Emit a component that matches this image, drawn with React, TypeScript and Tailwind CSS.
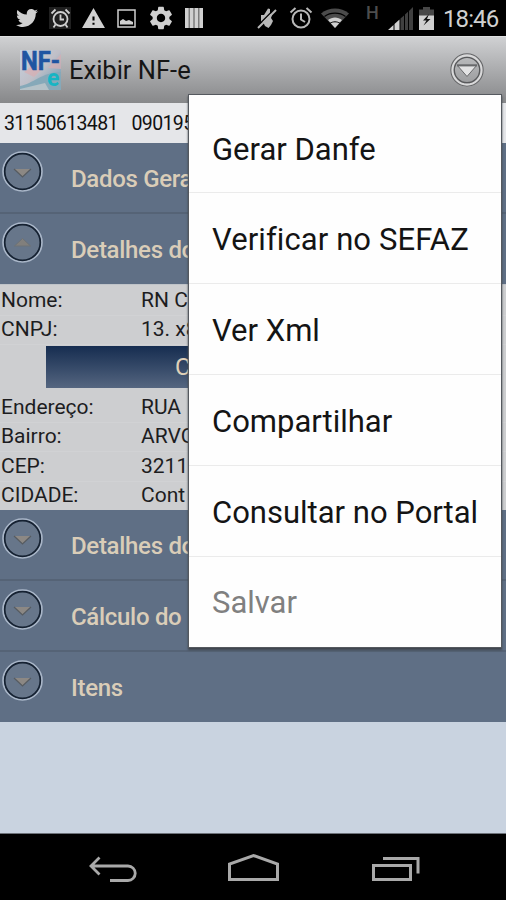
import { FaTwitter } from "react-icons/fa";
import { MdSettings, MdWarning } from "react-icons/md";

interface GroupProps {
    title: string;
    open?: boolean;
    divider?: boolean;
}

const menuItems = [
    { label: "Gerar Danfe", className: "h-[98px] pt-[13px]" },
    { label: "Verificar no SEFAZ", className: "h-[91px] pt-[5px] tracking-[0.1px]" },
    { label: "Ver Xml", className: "h-[91px] pt-[4px]" },
    { label: "Compartilhar", className: "h-[91px] pt-[4px]" },
    { label: "Consultar no Portal", className: "h-[91px] pt-[4px]" },
];

function AlarmIcon({ className }: { className?: string }) {
    return (
        <svg className={className} viewBox="0 0 24 24" fill="none" stroke="currentColor" strokeWidth="2">
            <circle cx="12" cy="13" r="8.5" />
            <path d="M12 7.5v6l4 2.5M1.5 6.5l5-4.5M22.5 6.5l-5-4.5" />
        </svg>
    );
}

function StatusBar() {
    return (
        <div className="flex h-[36px] shrink-0 items-center bg-black pl-4 text-[#d0d0d0]">
            <FaTwitter className="size-[22px]" />
            <div className="ml-[11px] flex h-[22px] w-[22px] items-center justify-center bg-[#202020]">
                <svg className="size-[21px]" viewBox="0 0 21 21" fill="none" stroke="currentColor" strokeWidth="1.8">
                    <circle cx="10.5" cy="11" r="7" />
                    <path d="M10.5 6.5v5h3.5M1.5 5.5l4-4M19.5 5.5l-4-4M5.5 16.5l-2 3M15.5 16.5l2 3" />
                </svg>
            </div>
            <MdWarning className="ml-[10px] size-[25px]" />
            <svg className="ml-[11px] h-[19px] w-[19px]" viewBox="0 0 19 19">
                <rect x="1" y="1" width="17" height="17" fill="none" stroke="currentColor" strokeWidth="1.5" />
                <path d="M3 15.5V12l3-2 3 2 3-1 4 2v2.5z" fill="currentColor" />
            </svg>
            <MdSettings className="ml-[11px] size-[28px]" />
            <svg className="ml-[10px] h-[20px] w-[18px]" viewBox="0 0 18 20">
                <path d="M0 0h18v20H0z" fill="#666" />
                <path d="M0 0h3.6v20H0zM4.8 0h3.6v20H4.8zM9.6 0h3.6v20H9.6zM14.4 0H18v20h-3.6z" fill="currentColor" />
            </svg>

            <svg className="ml-[54px] h-[22px] w-[21px]" viewBox="0 0 21 22">
                <path d="M4 8h3l4-6.500 2 .5v4l2 2-1 3 2 3-2 4-2.500 3-3.500-2-2-4H4z" fill="#b8b8b8" />
                <path d="M0 19.5 18 1.5" stroke="#000" strokeWidth="1.5" />
                <path d="M1 21 19 3" stroke="#b8b8b8" strokeWidth="2" />
            </svg>
            <AlarmIcon className="ml-[11px] h-[24px] w-[24px] text-[#b8b8b8]" />
            <svg className="ml-[8px] h-[20px] w-[28px]" viewBox="0 0 28 20">
                <path d="M0 5.5C8-1.3 20-1.3 28 5.5L14 20z" fill="#4b4b4b" />
                <path d="M3.5 8.5c6-4.5 15-4.5 21 0" fill="none" stroke="#000" strokeWidth="1.2" />
                <path d="M7 12c4-3.500 10-3.500 14 0l-7 8z" fill="#d0d0d0" />
                <path d="M9 15.3c3-2 7-2 10 0" fill="none" stroke="#000" strokeWidth="1" />
            </svg>
            <span className="ml-[17px] -mt-[10px] w-[14px] text-[18px] leading-none font-medium text-[#4d4d4d]">H</span>
            <svg className="ml-[8px] h-[23px] w-[25px]" viewBox="0 0 25 23">
                <path d="M0 23 5.5 18v5zM6.5 17l5-4.5V23h-5z" fill="#d0d0d0" />
                <path d="m12.5 11.5 3.5-3V23h-3.5zM17 7.5l3-2.7V23h-3zM21 4l4-4v23h-4z" fill="#404040" />
            </svg>
            <svg className="ml-[6px] h-[23px] w-[15px]" viewBox="0 0 15 23">
                <path d="M4 0h7v2.5h4V9H0V2.5h4z" fill="#474747" />
                <path d="M0 8.5h15V23H0z" fill="#d0d0d0" />
                <path d="M10 7 4 13.5h3.5l-3 5 7-6.500H8z" fill="#111" />
            </svg>
            <span className="ml-[9px] mt-[1px] text-[24px] leading-none tracking-[-0.9px]">18:46</span>
        </div>
    );
}

function AppIcon() {
    return (
        <svg className="ml-[20px] h-[40px] w-[41px]" viewBox="0 0 41 40">
            <defs>
                <linearGradient id="app-icon" x1="0" y1="0" x2="1" y2="1">
                    <stop offset="0" stopColor="#c6d3e2" />
                    <stop offset="0.5" stopColor="#c0bfc7" />
                    <stop offset="1" stopColor="#5b98b4" />
                </linearGradient>
            </defs>
            <rect width="41" height="40" fill="url(#app-icon)" />
            <path d="M4 22 14 14l8 5-8 8zM28 18l13-14v15z" fill="#d9aeb2" opacity=".7" />
            <path d="M0 36C13 34 22 22 41 22v18H0z" fill="#86a9b9" />
            <path d="m0 39 25-6 4 7H0z" fill="#b5c2c8" />
            <text
                x="1"
                y="20"
                fontSize="25"
                fontWeight="700"
                fill="#1f55a2"
                stroke="#1f55a2"
                strokeWidth="0.6"
                textLength="39"
                lengthAdjust="spacingAndGlyphs"
            >
                NF-
            </text>
            <text x="27" y="36" fontSize="23" fontWeight="700" fill="#16b5c4">
                e
            </text>
        </svg>
    );
}

function Header() {
    return (
        <div className="flex h-[67px] shrink-0 items-center border-t border-[#dfe0e1] bg-linear-to-b from-[#d0d1d3] to-[#87888a]">
            <AppIcon />
            <span className="ml-[8px] mt-[2px] text-[25.5px] leading-none text-[#161616]">Exibir NF-e</span>
            <svg className="ml-auto mr-[22px] size-[34px]" viewBox="0 0 34 34" fill="none">
                <circle cx="17" cy="17" r="15" stroke="#d9d9da" strokeWidth="3" />
                <circle cx="17" cy="17" r="16.2" stroke="#636466" strokeWidth="1.1" />
                <circle cx="17" cy="17" r="12.7" stroke="#58595b" strokeWidth="1.3" />
                <path d="M7 12h20l-10 11.5z" fill="#e3e3e4" stroke="#68696b" strokeWidth="1" />
                <path d="M7 12.5h20" stroke="#68696b" strokeWidth="1.8" />
            </svg>
        </div>
    );
}

function Group({ title, open, divider }: GroupProps) {
    return (
        <div
            className={
                divider
                    ? "flex h-[71px] shrink-0 border-b-2 border-[#556376] bg-[#5f6f85] pl-[2px]"
                    : "flex h-[70px] shrink-0 bg-[#5f6f85] pl-[2px]"
            }
        >
            <svg className="mt-[8px] size-[41px] shrink-0" viewBox="0 0 41 41">
                <circle cx="20.5" cy="20.5" r="19.4" fill="#65758a" stroke="#a9b6c8" strokeWidth="1.8" />
                <circle cx="20.5" cy="20.5" r="17.8" fill="#67768a" stroke="#152131" strokeWidth="1.7" />
                {open ? (
                    <path d="M12.5 24h16l-8-7.5z" fill="#817f7c" stroke="#6d7276" strokeWidth="1" />
                ) : (
                    <>
                        <path d="M12 18h17l-8.5 8z" fill="#8c8884" />
                        <path d="m12 18 8.5 8 8.5-8" fill="none" stroke="#565b61" strokeWidth="1.2" />
                    </>
                )}
            </svg>
            <span className="ml-[28px] mt-[21px] text-[24px] leading-[30px] font-medium tracking-[-0.3px] whitespace-nowrap text-[#dacdb8]">
                {title}
            </span>
        </div>
    );
}

function Row({ label, value }: { label: string; value: string }) {
    return (
        <div className="flex h-[29.5px] shrink-0 items-center border-b border-[#d1d2d4] text-[21px] leading-none text-[#1d1d1f]">
            <span className="w-[141px] pl-px">{label}</span>
            <span className="whitespace-nowrap">{value}</span>
        </div>
    );
}

function Details() {
    return (
        <div className="flex h-[226px] shrink-0 flex-col border-t border-[#bfc3c8] bg-[#cdced0] pt-px">
            <Row label="Nome:" value="RN C" />
            <Row label="CNPJ:" value="13. x8" />
            <div className="mx-[46px] mt-px mb-[5px] flex h-[42px] shrink-0 items-center bg-linear-to-b from-[#162d50] to-[#556680] pl-[129px] text-[24px] text-[#dfd0b8]">
                C
            </div>
            <Row label="Endereço:" value="RUA" />
            <Row label="Bairro:" value="ARVO" />
            <Row label="CEP:" value="3211" />
            <Row label="CIDADE:" value="Cont" />
        </div>
    );
}

function Menu() {
    return (
        <div className="absolute top-[95px] left-[189px] w-[312px] bg-[#fefefe] text-[31px] text-[#141414] shadow-[0_0_0_1px_#55595f,0_2px_2px_1px_#3f444b]">
            {menuItems.map((item) => (
                <div
                    key={item.label}
                    className={`flex items-center border-b border-[#ebebeb] pl-[23px] whitespace-nowrap ${item.className}`}
                >
                    {item.label}
                </div>
            ))}
            <div className="flex h-[90px] items-center pt-[3px] pl-[23px] text-[#808080]">Salvar</div>
        </div>
    );
}

function NavBar() {
    return (
        <div className="flex h-[67px] shrink-0 border-t border-[#6d727a] bg-black">
            <svg className="mt-[21px] ml-[89px] h-[29px] w-[48px]" viewBox="0 0 48 29" fill="none" stroke="#a9a9a9" strokeWidth="2.8">
                <path d="M2 11h37a7.2 7.2 0 0 1 0 14.5H21M10.5 2.5 2 11l8.5 8.5" />
            </svg>
            <svg className="mt-[19px] ml-[90px] h-[29px] w-[53px]" viewBox="0 0 53 29" fill="none" stroke="#a9a9a9" strokeWidth="3">
                <path d="M2.5 11v15.5h48V11l-24-8.5z" />
            </svg>
            <svg className="mt-[20px] ml-[89px] h-[28px] w-[52px]" viewBox="0 0 52 28" fill="none" stroke="#a9a9a9" strokeWidth="3">
                <path d="M4.5 11.5h37v14h-37zM14 4.5h35v15" />
            </svg>
        </div>
    );
}

export default function App() {
    return (
        <div className="relative flex h-[900px] w-[506px] flex-col overflow-hidden bg-[#c9d3e0] font-[Roboto,sans-serif]">
            <StatusBar />
            <Header />
            <div className="flex h-[40px] shrink-0 items-center bg-[#e5e6e9] pt-[2px] pl-[4px] text-[19.5px] tracking-[-0.6px] [word-spacing:2.5px] whitespace-pre text-[#111]">
                31150613481  090195
            </div>
            <Group title="Dados Gerais" divider />
            <Group title="Detalhes do Emitente" open />
            <Details />
            <Group title="Detalhes do Destinatário" divider />
            <Group title="Cálculo do Imposto" divider />
            <Group title="Itens" />
            <div className="flex-1" />
            <NavBar />
            <Menu />
        </div>
    );
}
